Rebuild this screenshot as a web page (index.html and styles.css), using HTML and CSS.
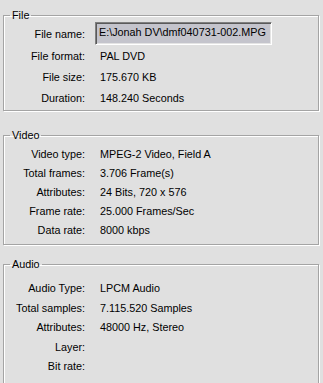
FILE: index.html
```html
<!DOCTYPE html>
<html>
<head>
    <title>File Properties</title>
    <link rel="stylesheet" href="styles.css">
</head>
<body>
    <fieldset class="group group-file">
        <legend>File</legend>
        <div class="rows">
            <span class="label">File name:</span>
            <span class="value"><span class="textbox">E:\Jonah DV\dmf040731-002.MPG</span></span>
            <span class="label">File format:</span>
            <span class="value">PAL DVD</span>
            <span class="label">File size:</span>
            <span class="value">175.670 KB</span>
            <span class="label">Duration:</span>
            <span class="value">148.240 Seconds</span>
        </div>
    </fieldset>

    <fieldset class="group group-video">
        <legend>Video</legend>
        <div class="rows">
            <span class="label">Video type:</span>
            <span class="value">MPEG-2 Video, Field A</span>
            <span class="label">Total frames:</span>
            <span class="value">3.706 Frame(s)</span>
            <span class="label">Attributes:</span>
            <span class="value">24 Bits, 720 x 576</span>
            <span class="label">Frame rate:</span>
            <span class="value">25.000 Frames/Sec</span>
            <span class="label">Data rate:</span>
            <span class="value">8000 kbps</span>
        </div>
    </fieldset>

    <fieldset class="group group-audio">
        <legend>Audio</legend>
        <div class="rows">
            <span class="label">Audio Type:</span>
            <span class="value">LPCM Audio</span>
            <span class="label">Total samples:</span>
            <span class="value">7.115.520 Samples</span>
            <span class="label">Attributes:</span>
            <span class="value">48000 Hz, Stereo</span>
            <span class="label">Layer:</span>
            <span class="value"></span>
            <span class="label">Bit rate:</span>
            <span class="value"></span>
        </div>
    </fieldset>
</body>
</html>
```

FILE: styles.css
```css
html, body {
    background-color: #e0e0e0;
}
body {
    margin: 0;
    padding: 0;
    font-family: "Liberation Sans", Arial, sans-serif;
    font-size: 10.8px;
    color: #000;
    overflow: hidden;
    height: 383px;
}
.group {
    margin: 0 4px 0 3px;
    padding: 0;
    border: 1px solid #a4a4a4;
    box-shadow: inset 1px 1px 0 #fff, 1px 1px 0 #fff;
    min-width: 0;
}
.group legend {
    margin-left: 6px;
    padding: 0 2px;
    line-height: 13px;
    height: 13px;
}
.group-file {
    margin-top: 8.5px;
    padding-top: 0.5px;
    padding-bottom: 2px;
}
.group-video {
    margin-top: 17.5px;
    padding-top: 2.5px;
    padding-bottom: 5px;
}
.group-audio {
    margin-top: 12.5px;
    padding-top: 8px;
    padding-bottom: 20px;
}
.rows {
    display: grid;
    grid-template-columns: 81px 1fr;
    column-gap: 15px;
    align-items: center;
}
.group-file .rows {
    grid-template-rows: 23px 21px 21px 21px;
}
.group-video .rows {
    grid-auto-rows: 19px;
}
.group-audio .rows {
    grid-auto-rows: 19.5px;
}
.label {
    text-align: right;
    white-space: nowrap;
}
.value {
    white-space: nowrap;
}
.textbox {
    display: block;
    box-sizing: border-box;
    margin-left: -5px;
    width: 177px;
    height: 23px;
    line-height: 19px;
    padding-left: 3px;
    background-color: #c4c4cc;
    border-top: 1px solid #808080;
    border-left: 1px solid #808080;
    border-right: 1px solid #fff;
    border-bottom: 1px solid #fff;
    box-shadow: inset 1px 1px 0 #5a5a5a, inset -1px -1px 0 #e4e4e4;
}
```
